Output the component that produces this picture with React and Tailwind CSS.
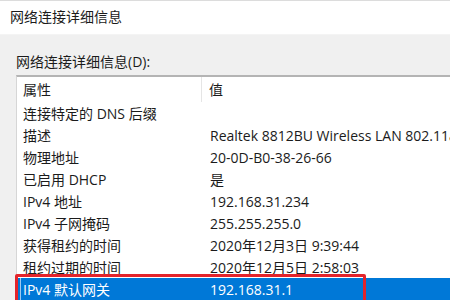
import React from "react";

const rows = [
  ["连接特定的 DNS 后缀", ""],
  ["描述", "Realtek 8812BU Wireless LAN 802.11ac USB NIC"],
  ["物理地址", "20-0D-B0-38-26-66"],
  ["已启用 DHCP", "是"],
  ["IPv4 地址", "192.168.31.234"],
  ["IPv4 子网掩码", "255.255.255.0"],
  ["获得租约的时间", "2020年12月3日 9:39:44"],
  ["租约过期的时间", "2020年12月5日 2:58:03"],
  ["IPv4 默认网关", "192.168.31.1"],
];

const font = {
  fontFamily: '"Segoe UI", "Open Sans", "Noto Sans CJK SC", sans-serif',
};

export default function App() {
  return (
    <div
      className="w-[450px] h-[300px] overflow-hidden bg-[#f0f0f0] text-[14px] text-[#1b1b1b] flex flex-col"
      style={font}
    >
      <div className="h-[35px] shrink-0 bg-white border-t border-[#dcdcdc] border-b border-b-[#f4f4f4] flex items-center pl-[10px] pb-[2px]">
        网络连接详细信息
      </div>
      <div className="flex flex-col pl-[16px] pt-[16px] flex-1">
        <div className="h-[22px] leading-[22px] mb-[2px]">网络连接详细信息(D):</div>
        <div className="flex-1 bg-white border-t-2 border-t-[#b4b4b4] border-l border-l-[#d6d6d6] flex flex-col relative">
          <div className="h-[25px] flex items-center shrink-0">
            <div className="w-[185px] pl-[6px] h-full flex items-center border-r border-[#e5e5e5]">属性</div>
            <div className="pl-[7px]">值</div>
          </div>
          {rows.map(([k, v], i) => {
            const sel = i === rows.length - 1;
            return (
              <div
                key={i}
                className={
                  "h-[22px] shrink-0 flex items-center whitespace-nowrap " +
                  (sel ? "bg-[#0078d7] text-white relative" : "")
                }
              >
                {sel && (
                  <div className="absolute left-[3px] top-0 bottom-0 w-px bg-[#9fc8ee]" />
                )}
                <div className="w-[185px] pl-[6px] shrink-0">{k}</div>
                <div className="pl-[8px]">{v}</div>
                {sel && (
                  <div className="absolute left-[-2px] top-[-4px] w-[351px] h-[34px] border-[3px] border-[#e3242b] rounded-[2px]" />
                )}
              </div>
            );
          })}
        </div>
      </div>
    </div>
  );
}
